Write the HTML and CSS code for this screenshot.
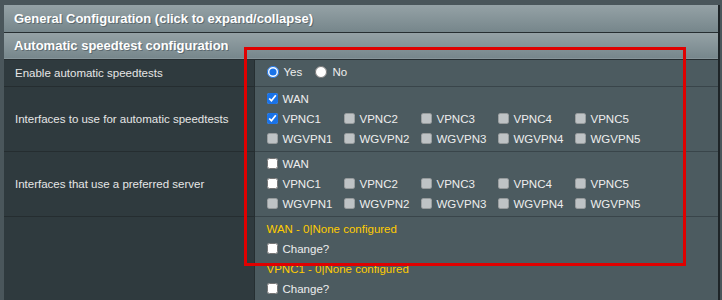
FILE: index.html
```html
<!DOCTYPE html>
<html lang="en">
  <head>
    <meta charset="UTF-8" />
    <title>Speedtest</title>
    <link rel="stylesheet" href="styles.css">
  </head>
  <body>
    <div class="page">
      <table class="cfg">
        <thead>
          <tr><th colspan="2" class="hdr">General Configuration (click to expand/collapse)</th></tr>
          <tr><th colspan="2" class="hdr">Automatic speedtest configuration</th></tr>
        </thead>
        <tbody>
          <tr class="row-1">
            <th>Enable automatic speedtests</th>
            <td>
              <label class="opt"><input type="radio" name="auto" checked /> Yes</label>
              <label class="opt"><input type="radio" name="auto" /> No</label>
            </td>
          </tr>
          <tr>
            <th>Interfaces to use for automatic speedtests</th>
            <td>
              <div class="grid">
                <label class="opt"><input type="checkbox" checked /> WAN</label>
              </div>
              <div class="grid">
                <label class="opt"><input type="checkbox" checked /> VPNC1</label>
                <label class="opt"><input type="checkbox" disabled /> VPNC2</label>
                <label class="opt"><input type="checkbox" disabled /> VPNC3</label>
                <label class="opt"><input type="checkbox" disabled /> VPNC4</label>
                <label class="opt"><input type="checkbox" disabled /> VPNC5</label>
              </div>
              <div class="grid">
                <label class="opt"><input type="checkbox" disabled /> WGVPN1</label>
                <label class="opt"><input type="checkbox" disabled /> WGVPN2</label>
                <label class="opt"><input type="checkbox" disabled /> WGVPN3</label>
                <label class="opt"><input type="checkbox" disabled /> WGVPN4</label>
                <label class="opt"><input type="checkbox" disabled /> WGVPN5</label>
              </div>
            </td>
          </tr>
          <tr>
            <th>Interfaces that use a preferred server</th>
            <td>
              <div class="grid">
                <label class="opt"><input type="checkbox" /> WAN</label>
              </div>
              <div class="grid">
                <label class="opt"><input type="checkbox" /> VPNC1</label>
                <label class="opt"><input type="checkbox" disabled /> VPNC2</label>
                <label class="opt"><input type="checkbox" disabled /> VPNC3</label>
                <label class="opt"><input type="checkbox" disabled /> VPNC4</label>
                <label class="opt"><input type="checkbox" disabled /> VPNC5</label>
              </div>
              <div class="grid">
                <label class="opt"><input type="checkbox" disabled /> WGVPN1</label>
                <label class="opt"><input type="checkbox" disabled /> WGVPN2</label>
                <label class="opt"><input type="checkbox" disabled /> WGVPN3</label>
                <label class="opt"><input type="checkbox" disabled /> WGVPN4</label>
                <label class="opt"><input type="checkbox" disabled /> WGVPN5</label>
              </div>
            </td>
          </tr>
          <tr>
            <th></th>
            <td>
              <div class="server">WAN - 0|None configured</div>
              <div class="grid">
                <label class="opt"><input type="checkbox" /> Change?</label>
              </div>
              <div class="server">VPNC1 - 0|None configured</div>
              <div class="grid">
                <label class="opt"><input type="checkbox" /> Change?</label>
              </div>
            </td>
          </tr>
        </tbody>
      </table>
      <div class="highlight"></div>
    </div>
  </body>
</html>
```

FILE: styles.css
```css
* {
  padding: 0;
  margin: 0;
  box-sizing: border-box;
}
html,
body {
  background-color: #4a565b;
  font-family: "Liberation Sans", Arial, sans-serif;
  font-size: 11.5px;
  overflow: hidden;
}

.page {
  position: relative;
  padding: 5px 0 0 4px;
}

.cfg {
  width: 716px;
  border-collapse: collapse;
  border-right: 2px solid #1d2427;
}

.hdr {
  height: 27px;
  padding: 0 10px;
  text-align: left;
  font-size: 13px;
  font-weight: bold;
  color: #ffffff;
  text-shadow: 1px 1px 0 #5d6a6f;
  background: linear-gradient(#95a2a6, #76868b);
  border-bottom: 1px solid #262e31;
}

tbody th {
  width: 250px;
  padding: 0 11px;
  text-align: left;
  font-weight: normal;
  color: #e6e6e6;
  background-color: #2f3a3e;
  border-right: 1px solid #262f32;
  border-bottom: 1px solid #252d30;
}

tbody td {
  padding: 2px 12px;
  color: #eeeeee;
  background-color: #4c5b60;
  border-bottom: 1px solid #39454a;
  vertical-align: top;
}

.row-1 th,
.row-1 td {
  height: 27px;
  padding-top: 0;
  padding-bottom: 0;
  vertical-align: middle;
}

.grid {
  display: grid;
  grid-template-columns: repeat(5, 77px);
  height: 20px;
  align-items: center;
}

.opt {
  display: inline-flex;
  align-items: center;
  gap: 5px;
  margin-right: 10px;
  white-space: nowrap;
}

.opt input {
  width: 11px;
  height: 11px;
  accent-color: #1a73e8;
}

.opt input[type="radio"] {
  width: 12px;
  height: 12px;
}

.server {
  height: 20px;
  line-height: 20px;
  color: #ffcc00;
}

.highlight {
  position: absolute;
  left: 244px;
  top: 47px;
  width: 442px;
  height: 219px;
  border: 3px solid #e00000;
}
```
